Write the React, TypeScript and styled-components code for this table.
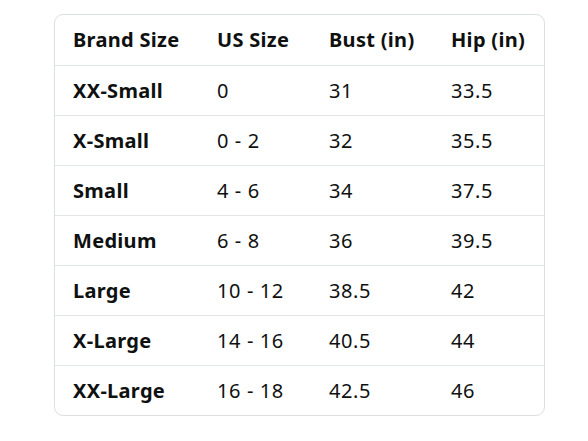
import React from "react";
import styled, { createGlobalStyle } from "styled-components";

const GlobalStyle = createGlobalStyle`
  body {
    margin: 0;
    background: #ffffff;
    font-family: "Noto Sans", "Open Sans", sans-serif;
    color: #0f1111;
  }
`;

const Page = styled.div`
  padding: 14px 0 0 54px;
`;

const Frame = styled.div`
  display: inline-block;
  border: 1px solid #dcdfdf;
  border-radius: 9px;
  overflow: hidden;
`;

const Table = styled.table`
  border-collapse: collapse;
  table-layout: fixed;
  width: 489px;
  font-size: 20px;
`;

const Col = styled.col<{ $width: number }>`
  width: ${props => props.$width}px;
`;

const HeadRow = styled.tr`
  height: 50px;
  border-bottom: 1px solid #e3e6e6;
`;

const Row = styled.tr`
  height: 50px;
  & + & {
    border-top: 1px solid #e3e6e6;
  }
`;

const HeadCell = styled.th`
  text-align: left;
  font-weight: 700;
  letter-spacing: 0.3px;
  padding: 0 0 0 18px;
  white-space: nowrap;
`;

const Cell = styled.td<{ $bold?: boolean }>`
  padding: 0 0 0 18px;
  font-weight: ${props => (props.$bold ? 700 : 400)};
  letter-spacing: ${props => (props.$bold ? "0.3px" : "0.6px")};
  white-space: nowrap;
`;

const headers = ["Brand Size", "US Size", "Bust (in)", "Hip (in)"];
const widths = [144, 112, 122, 111];

const sizes = [
  ["XX-Small", "0", "31", "33.5"],
  ["X-Small", "0 - 2", "32", "35.5"],
  ["Small", "4 - 6", "34", "37.5"],
  ["Medium", "6 - 8", "36", "39.5"],
  ["Large", "10 - 12", "38.5", "42"],
  ["X-Large", "14 - 16", "40.5", "44"],
  ["XX-Large", "16 - 18", "42.5", "46"],
];

export default function App() {
  return (
    <>
      <GlobalStyle />
      <Page>
        <Frame>
          <Table>
            <colgroup>
              {widths.map((w, i) => (
                <Col key={i} $width={w} />
              ))}
            </colgroup>
            <thead>
              <HeadRow>
                {headers.map(h => (
                  <HeadCell key={h}>{h}</HeadCell>
                ))}
              </HeadRow>
            </thead>
            <tbody>
              {sizes.map(row => (
                <Row key={row[0]}>
                  {row.map((value, i) => (
                    <Cell key={i} $bold={i === 0}>
                      {value}
                    </Cell>
                  ))}
                </Row>
              ))}
            </tbody>
          </Table>
        </Frame>
      </Page>
    </>
  );
}
